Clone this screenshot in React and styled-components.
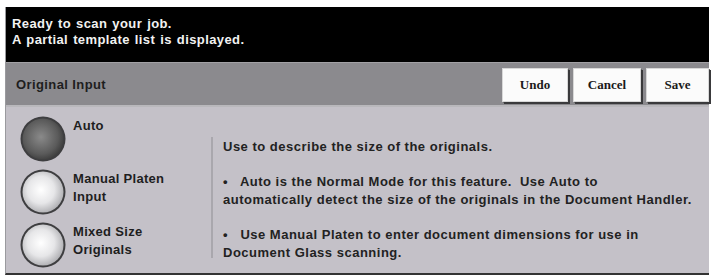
import React from "react";
import styled, { createGlobalStyle } from "styled-components";

const Global = createGlobalStyle`
  body {
    margin: 0;
    background: #ffffff;
    font-family: "Liberation Sans", Arial, sans-serif;
  }
`;

function Radio({ selected }) {
  const id = selected ? "on" : "off";
  return (
    <RadioDisc>
      <svg width="48" height="48" viewBox="0 0 48 48">
        <defs>
          <radialGradient id={id} cx="45%" cy="45%" r="60%">
            {selected ? (
              <>
                <stop offset="0%" stopColor="#8a8a8a" />
                <stop offset="70%" stopColor="#5a5a5a" />
                <stop offset="100%" stopColor="#3a3a3a" />
              </>
            ) : (
              <>
                <stop offset="0%" stopColor="#ffffff" />
                <stop offset="55%" stopColor="#e6e6e8" />
                <stop offset="100%" stopColor="#a9a9ad" />
              </>
            )}
          </radialGradient>
        </defs>
        <circle cx="24" cy="24" r="22.5" fill="#3e3e40" />
        <circle cx="24" cy="24" r="20.5" fill={`url(#${id})`} />
      </svg>
    </RadioDisc>
  );
}

const options = [
  { label: ["Auto"], selected: true },
  { label: ["Manual Platen", "Input"] },
  { label: ["Mixed Size", "Originals"] },
];

export default function App() {
  return (
    <>
      <Global />
      <Frame>
        <Message>
          <div>Ready to scan your job.</div>
          <div>A partial template list is displayed.</div>
        </Message>
        <TitleBar>
          <Title>Original Input</Title>
          <Buttons>
            <Btn w={66}>Undo</Btn>
            <Btn w={68}>Cancel</Btn>
            <Btn w={63}>Save</Btn>
          </Buttons>
        </TitleBar>
        <Body>
          <Options>
            {options.map((o, i) => (
              <Option key={i}>
                <Radio selected={o.selected} />
                <Label>
                  {o.label.map((l) => (
                    <div key={l}>{l}</div>
                  ))}
                </Label>
              </Option>
            ))}
          </Options>
          <Help>
            <Para>Use to describe the size of the originals.</Para>
            <Para>
              •&nbsp;&nbsp; Auto is the Normal Mode for this feature.&nbsp; Use Auto to
              <br />
              automatically detect the size of the originals in the Document Handler.
            </Para>
            <Para>
              •&nbsp;&nbsp; Use Manual Platen to enter document dimensions for use in
              <br />
              Document Glass scanning.
            </Para>
          </Help>
        </Body>
      </Frame>
    </>
  );
}

const Frame = styled.div`
  margin: 7px 4px 0 5px;
  width: 703px;
  border-left: 1px solid #9a9a9e;
  border-bottom: 2px solid #333;
  display: flex;
  flex-direction: column;
`;

const Message = styled.div`
  background: #000;
  color: #f2f2f2;
  height: 55px;
  padding: 9px 0 0 6px;
  box-sizing: border-box;
  font-size: 13px;
  font-weight: bold;
  letter-spacing: 0.4px;
  word-spacing: 1px;
  line-height: 16px;
`;

const TitleBar = styled.div`
  background: #8b8a8e;
  height: 45px;
  border-top: 1px solid #a2a1a5;
  border-bottom: 2px solid #b9b8bc;
  box-sizing: border-box;
  display: flex;
  align-items: center;
  justify-content: space-between;
`;

const Title = styled.div`
  padding-left: 10px;
  font-size: 13px;
  font-weight: bold;
  letter-spacing: 0.4px;
  color: #1e1e1e;
`;

const Buttons = styled.div`
  display: flex;
  gap: 5px;
  align-self: flex-start;
  margin-top: 5px;
`;

const Btn = styled.div`
  width: ${(p) => p.w}px;
  height: 34px;
  box-sizing: border-box;
  background: #fbfbfb;
  border: 1px solid #d8d8d8;
  box-shadow: 2px 2px 0 #3a3a3c, 1px 1px 0 #6a6a6a;
  display: flex;
  align-items: center;
  justify-content: center;
  font-family: "Liberation Serif", "Times New Roman", serif;
  font-weight: bold;
  font-size: 13px;
  color: #1a1a1a;
`;

const Body = styled.div`
  background: #c4c1c8;
  height: 166px;
  display: flex;
  padding: 8px 0 0 13px;
  box-sizing: border-box;
`;

const Options = styled.div`
  width: 192px;
  display: flex;
  flex-direction: column;
  gap: 5px;
`;

const Option = styled.div`
  display: flex;
  align-items: flex-start;
  height: 48px;
`;

const RadioDisc = styled.div`
  width: 48px;
  height: 48px;
  flex: none;
`;

const Label = styled.div`
  margin-left: 6px;
  padding-top: 2px;
  font-size: 13px;
  font-weight: bold;
  letter-spacing: 0.3px;
  line-height: 18px;
  color: #1e1e1e;
`;

const Help = styled.div`
  margin-top: 22px;
  height: 120px;
  border-left: 2px solid #a9a7ad;
  padding: 1px 0 0 10px;
  font-size: 13px;
  font-weight: bold;
  letter-spacing: 0.5px;
  color: #222;
  line-height: 18px;
`;

const Para = styled.p`
  margin: 0 0 17px;
`;
